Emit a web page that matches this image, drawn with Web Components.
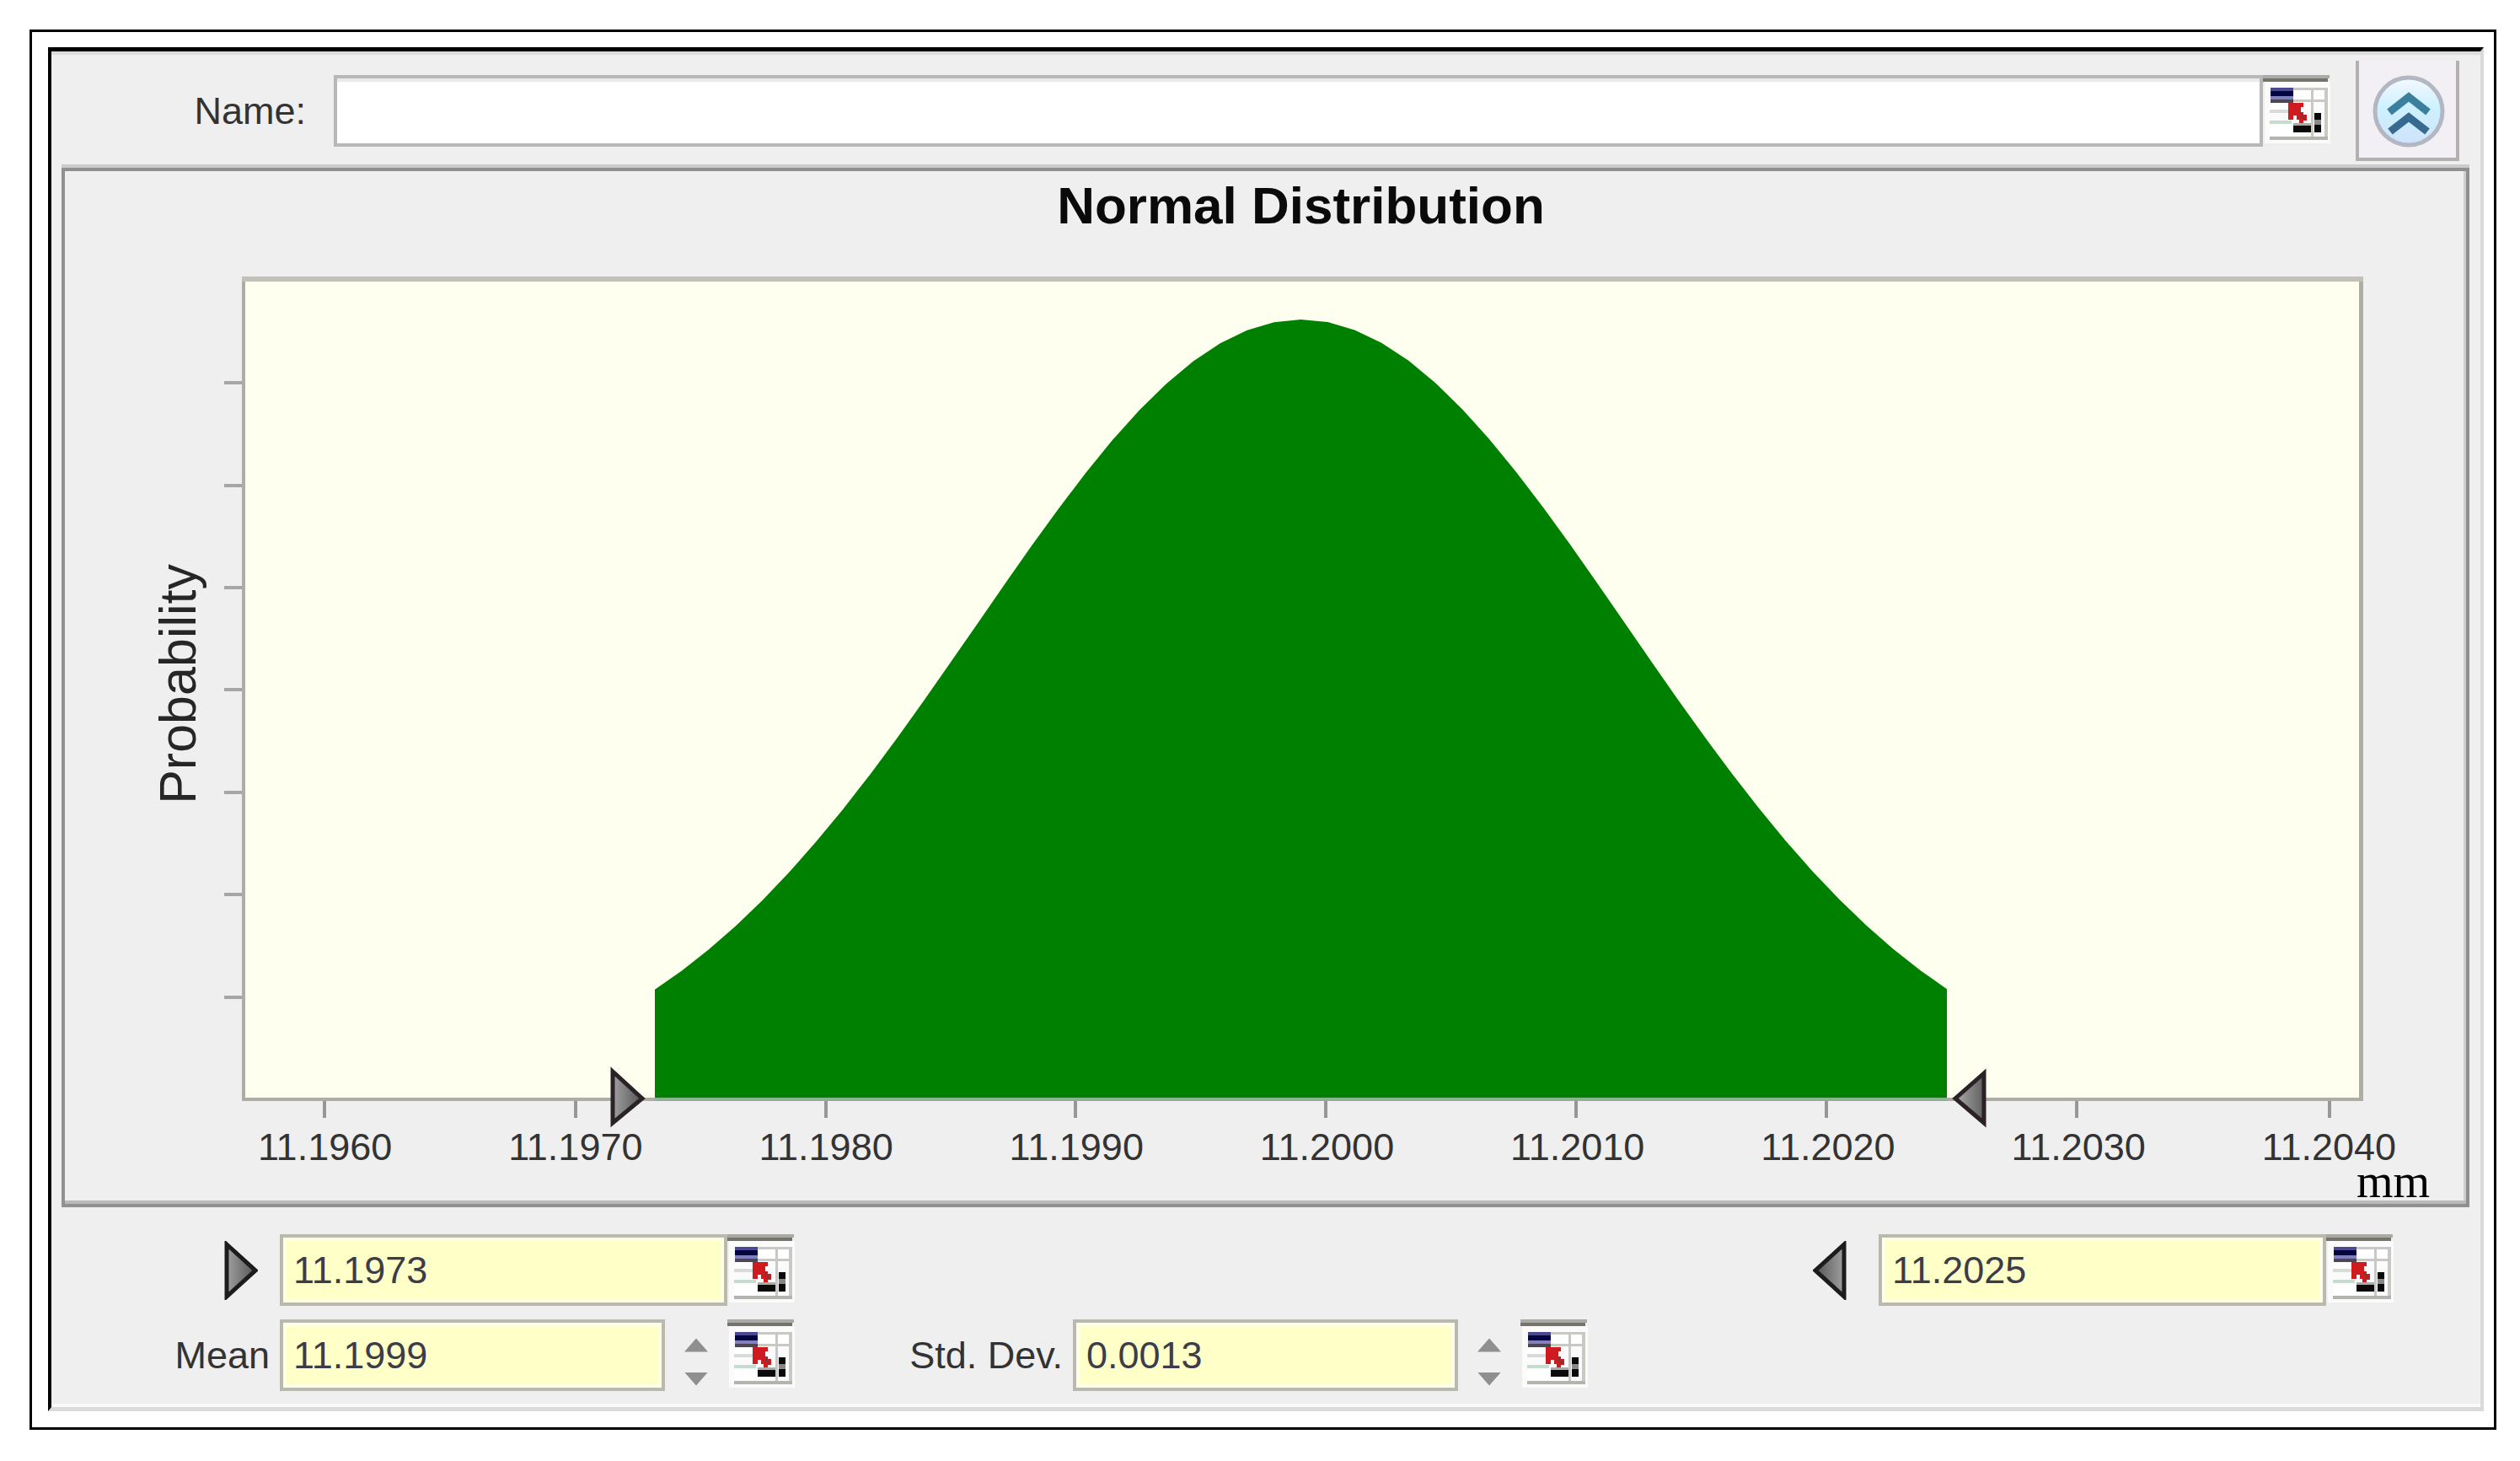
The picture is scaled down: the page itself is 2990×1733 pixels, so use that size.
<!DOCTYPE html>
<html lang="en">
<head>
<meta charset="utf-8">
<title>Normal Distribution</title>
<style>
  body { margin: 0; background: #fff; font-family: "Liberation Sans", sans-serif; font-size: 45px; color: #333; }
</style>
</head>
<body>
<distribution-editor></distribution-editor>
<script>
const define = (name, html, setup) => {
  const template = document.createElement('template');
  template.innerHTML = html;
  customElements.define(name, class extends HTMLElement {
    constructor() {
      super();
      this.attachShadow({ mode: 'open' }).append(template.content.cloneNode(true));
    }
    connectedCallback() { if (setup) setup(this, this.shadowRoot); }
  });
};

/* Button that picks a cell from a sheet */
define('cell-picker', `
<style>
  :host { display: block; flex: none; width: 80px; height: 85px; }
  button { display: block; width: 100%; height: 100%; padding: 0; border: 0; background: none; }
  svg { display: block; }
</style>
<button aria-label="Pick cell">
  <svg width="80" height="85" viewBox="0 0 80 85">
    <rect x="2" y="8" width="78" height="73" fill="#fbfbfb"/>
    <rect width="79" height="4" fill="#aaa9a4"/><rect y="4" width="77" height="4" fill="#75746c"/>
    <g fill="#fff"><rect x="8" y="34" width="26" height="8"/><rect x="8" y="60" width="26" height="12"/><rect x="37" y="18" width="21" height="14"/><rect x="61" y="18" width="13" height="14"/></g>
    <g fill="#c8c8c4">
      <rect x="36" y="15" width="41" height="3"/><rect x="36" y="29" width="41" height="3"/>
      <rect x="57" y="15" width="3" height="62"/><rect x="73" y="15" width="4" height="62"/>
      <rect x="8" y="73" width="69" height="4" fill="#b4b3ae"/>
      <rect x="8" y="41" width="24" height="4" fill="#d8dcd8"/><rect x="8" y="54" width="26" height="4" fill="#c6dccf"/>
    </g>
    <rect x="9" y="15" width="27" height="4" fill="#4a4a92"/><rect x="9" y="19" width="27" height="6" fill="#050540"/>
    <rect x="9" y="25" width="27" height="4" fill="#8080c0"/><rect x="9" y="29" width="27" height="4" fill="#4c4652"/>
    <path d="M30 33H48V38H45V44H48V47H52V54H48V57H43V53H40V48H36V53H30Z" fill="#cf1a20"/>
    <path d="M44 45H48V49H51V53H47V50H44Z" fill="#9a2c2c"/>
    <rect x="36" y="57" width="21" height="3" fill="#aaa"/><rect x="36" y="60" width="21" height="8" fill="#0a0a0a"/>
    <rect x="61" y="45" width="8" height="8" fill="#0a0a0a"/><rect x="61" y="53" width="8" height="6" fill="#888"/><rect x="61" y="59" width="8" height="9" fill="#0a0a0a"/>
  </svg>
</button>`);

/* Round double-chevron button */
define('collapse-button', `
<style>
  :host { display: block; flex: none; width: 123px; height: 119px; }
  button { display: flex; align-items: center; justify-content: center; width: 100%; height: 100%; padding: 0; box-sizing: border-box;
    border: 4px solid #b4b0b0; border-top: 0; background: #f2f0f4; }
</style>
<button aria-label="Collapse">
  <svg width="90" height="90" viewBox="0 0 90 90">
    <defs><linearGradient id="g" x1="0" y1="0" x2="0" y2="1"><stop offset="0" stop-color="#f4f8ff"/><stop offset=".45" stop-color="#cdf1ff"/><stop offset="1" stop-color="#cfe2fb"/></linearGradient></defs>
    <circle cx="46" cy="47" r="40" fill="url(#g)" stroke="#b2b7c1" stroke-width="5"/>
    <path d="M23 48L46 30L69 48" fill="none" stroke="#3a7f9c" stroke-width="9"/>
    <path d="M24 71L46 54L68 71" fill="none" stroke="#38698f" stroke-width="9"/>
  </svg>
</button>`);

/* Labelled value with optional up/down buttons and a cell picker */
define('value-field', `
<style>
  :host { display: flex; align-items: center; }
  label { flex: none; box-sizing: border-box; width: var(--label-width, auto); padding-right: 12px; text-align: right; line-height: 60px; white-space: nowrap; }
  label.marker { display: flex; justify-content: flex-end; padding-right: 26px; }
  :host([side="right"]) label.marker { padding-right: 38px; }
  :host([side="right"]) label svg { transform: scaleX(-1); }
  :host([kind="name"]) label { padding-right: 33px; }
  input { min-width: 0; width: var(--field-width); height: 85px; box-sizing: border-box; margin: 0; padding: 0 12px; border: 4px solid #b9b9b0;
    border-radius: 0; outline: 0; font: inherit; color: #3c3c4a; background: #ffffc8; box-shadow: inset 0 0 0 4px #ffffe6; }
  :host([kind="name"]) input { flex: 1; background: #fff; border-color: #b8b8b8; box-shadow: inset 0 4px #e9e9e9; }
  .spin { flex: none; display: flex; flex-direction: column; align-items: center; gap: 24px; width: 74px; padding-top: 16px; }
  .spin button { display: block; width: 28px; height: 16px; padding: 0; border: 0; background: #8f8f8f; clip-path: polygon(50% 0, 100% 100%, 0 100%); }
  .spin button + button { clip-path: polygon(0 0, 100% 0, 50% 100%); }
</style>
<label for="v"></label><input id="v" type="text"><span class="spin"><button aria-label="Increase"></button><button aria-label="Decrease"></button></span><cell-picker></cell-picker>`,
(host, root) => {
  const label = root.querySelector('label');
  const side = host.getAttribute('side');
  if (side) {
    label.className = 'marker';
    label.innerHTML = `<svg width="40" height="70" viewBox="0 0 40 70" role="img" aria-label="${side === 'left' ? 'Lower limit' : 'Upper limit'}"><defs><linearGradient id="t"><stop offset="0" stop-color="#a0a0a0"/><stop offset="1" stop-color="#555"/></linearGradient></defs><path d="M3 4L37 35L3 66Z" fill="url(#t)" stroke="#1c1c1c" stroke-width="5"/></svg>`;
  } else label.textContent = host.getAttribute('label');
  root.querySelector('input').value = host.getAttribute('value') || '';
  if (!host.hasAttribute('spinner')) root.querySelector('.spin').remove();
});

/* Density plot with limit markers */
define('distribution-chart', `
<style>
  :host { display: block; font-family: "Liberation Sans", sans-serif; border: 4px solid #909090; box-shadow: 0 -4px #cbcbcb, inset 0 -4px #bababa, inset -3px 0 #cfcfcf; padding-bottom: 9px; }
  h1 { margin: 0; padding: 6px 124px 47px 208px; font-size: 62px; line-height: 70px; font-weight: bold; text-align: center; color: #0a0a0a; }
  .plot { display: flex; padding-right: 118px; }
  .axis { flex: none; display: flex; justify-content: flex-end; align-items: center; width: 185px; box-sizing: border-box; padding: 0 16px 43px 0; }
  .axis span { writing-mode: vertical-rl; transform: rotate(180deg); font-size: 61px; line-height: 70px; color: #262626; }
  svg { display: block; flex: 1; min-width: 0; }
  .ticks { display: grid; grid-template-columns: repeat(9, 1fr); margin: 0 14px 0 160px; padding: 0; list-style: none; font-size: 45px; line-height: 44px; text-align: center; }
  .unit { margin: 0; padding-right: 43px; text-align: right; font-family: "Liberation Serif", serif; font-size: 56px; line-height: 36px; color: #000; }
</style>
<h1>Normal Distribution</h1>
<div class="plot">
  <div class="axis"><span>Probability</span></div>
  <svg viewBox="0 0 2546 1013" role="img" aria-label="Normal density between the limits">
    <defs>
      <linearGradient id="m"><stop offset="0" stop-color="#a0a0a0"/><stop offset="1" stop-color="#555"/></linearGradient>
      <linearGradient id="n"><stop offset="0" stop-color="#aaa"/><stop offset="1" stop-color="#606060"/></linearGradient>
    </defs>
    <rect x="25" y="2" width="2517" height="978" fill="#adada4"/>
    <rect x="25" y="2" width="2517" height="6" fill="#c1c1ba"/>
    <rect x="29" y="8" width="2508" height="968" fill="#fffff0"/>
    <path class="y" stroke="#a6a6a6" stroke-width="4"/>
    <path class="x" stroke="#979797" stroke-width="4"/>
    <path class="curve" fill="#008000"/>
    <rect x="515" y="976" width="1533" height="4" fill="#8bb390"/>
    <path d="M465 945L500 977L465 1006Z" fill="url(#m)" stroke="#2a2226" stroke-width="5"/>
    <path d="M2092 947L2058 977L2092 1006Z" fill="url(#n)" stroke="#2a2226" stroke-width="5"/>
  </svg>
</div>
<ul class="ticks"></ul>
<p class="unit">mm</p>`,
(host, root) => {
  const mean = 1282, sigma = 386, peak = 923, base = 976, low = 515, high = 2048, steps = 48;
  let d = `M${low} ${base}`;
  for (let i = 0; i <= steps; i++) {
    const x = low + (high - low) * i / steps;
    d += `L${x.toFixed(1)} ${(base - peak * Math.exp(-(((x - mean) / sigma) ** 2) / 2)).toFixed(1)}`;
  }
  root.querySelector('.curve').setAttribute('d', d + `V${base}Z`);
  root.querySelector('.y').setAttribute('d', [128, 250, 371, 492, 614, 735, 857].map(y => `M4 ${y}H25`).join(''));
  root.querySelector('.x').setAttribute('d', [123, 421, 718, 1014, 1311, 1608, 1905, 2202, 2502].map(x => `M${x} 980V1000`).join(''));
  root.querySelector('.ticks').innerHTML = Array.from({ length: 9 }, (_, i) => `<li>${(11.196 + i / 1000).toFixed(4)}</li>`).join('');
});

define('distribution-editor', `
<style>
  :host { display: block; margin: 35px 28px 37px 35px; border: 3px solid #000; padding: 18px 12px 19px 19px; }
  main { background: #efefef; border: solid; border-width: 5px 4px 5px 4px; border-color: #000 #dadada #dadada #000; box-shadow: inset 0 4px #dcdcdc, inset 0 -4px #f9f9f9; }
  header { display: flex; align-items: center; gap: 30px; padding: 11px 25px 8px 0; }
  header value-field { flex: 1; --label-width: 335px; }
  distribution-chart { margin: 0 13px 0 12px; }
  footer { display: flex; flex-direction: column; gap: 16px; padding: 32px 103px 19px 0; }
  .row { display: flex; justify-content: space-between; }
  .start { justify-content: flex-start; }
  value-field { --label-width: 271px; --field-width: 531px; }
  [side="right"] { --label-width: auto; }
  [spinner] { --field-width: 457px; }
  .dev { --label-width: 330px; }
</style>
<main>
  <header><value-field kind="name" label="Name:"></value-field><collapse-button></collapse-button></header>
  <distribution-chart></distribution-chart>
  <footer>
    <div class="row"><value-field side="left" value="11.1973"></value-field><value-field side="right" value="11.2025"></value-field></div>
    <div class="row start"><value-field spinner label="Mean" value="11.1999"></value-field><value-field class="dev" spinner label="Std. Dev." value="0.0013"></value-field></div>
  </footer>
</main>`);
</script>
</body>
</html>
